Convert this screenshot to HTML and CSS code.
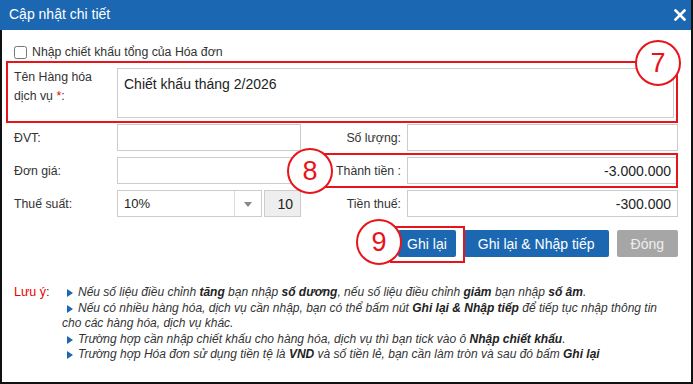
FILE: index.html
```html
<!DOCTYPE html>
<html lang="vi">
<head>
  <meta charset="UTF-8">
  <meta name="viewport" content="width=device-width, initial-scale=1">
  <title>Cập nhật chi tiết</title>
  <link rel="stylesheet" href="styles.css">
</head>
<body>
  <div class="dialog">
    <div class="dialog-header">
      <span class="dialog-title">Cập nhật chi tiết</span>
      <button class="close-btn" aria-label="Đóng">
        <svg width="12" height="12" viewBox="0 0 12 12"><path d="M1.5 1.5 L10.5 10.5 M10.5 1.5 L1.5 10.5" stroke="#fff" stroke-width="2.6" stroke-linecap="square"/></svg>
      </button>
    </div>

    <div class="dialog-body">
      <label class="check-row">
        <input type="checkbox" id="discount-total">
        <span>Nhập chiết khấu tổng của Hóa đơn</span>
      </label>

      <div class="name-row">
        <label class="field-label" for="item-name">Tên Hàng hóa dịch vụ <span class="req">*</span>:</label>
        <textarea id="item-name" class="name-input">Chiết khấu tháng 2/2026</textarea>
      </div>

      <div class="form-grid">
        <label class="field-label">ĐVT:</label>
        <input type="text" class="text-input">
        <label class="field-label right">Số lượng:</label>
        <input type="text" class="text-input">

        <label class="field-label">Đơn giá:</label>
        <input type="text" class="text-input">
        <label class="field-label right">Thành tiền :</label>
        <input type="text" class="text-input num" value="-3.000.000">

        <label class="field-label">Thuế suất:</label>
        <div class="tax-cell">
          <div class="select-box">
            <span class="select-value">10%</span>
            <span class="select-arrow"></span>
          </div>
          <div class="tax-rate">10</div>
        </div>
        <label class="field-label right">Tiền thuế:</label>
        <input type="text" class="text-input num" value="-300.000">
      </div>

      <div class="actions">
        <button class="btn btn-primary btn-save">Ghi lại</button>
        <button class="btn btn-primary">Ghi lại &amp; Nhập tiếp</button>
        <button class="btn btn-disabled">Đóng</button>
      </div>

      <div class="notes">
        <div class="notes-title"><span class="red">Lưu ý</span>:</div>
        <div class="notes-list">
          <p><span class="arrow"></span>Nếu số liệu điều chỉnh <b>tăng</b> bạn nhập <b>số dương</b>, nếu số liệu điều chỉnh <b>giảm</b> bạn nhập <b>số âm</b>.</p>
          <p><span class="arrow"></span>Nếu có nhiều hàng hóa, dịch vụ cần nhập, bạn có thể bấm nút <b>Ghi lại &amp; Nhập tiếp</b> để tiếp tục nhập thông tin cho các hàng hóa, dịch vụ khác.</p>
          <p><span class="arrow"></span>Trường hợp cần nhập chiết khấu cho hàng hóa, dịch vụ thì bạn tick vào ô <b>Nhập chiết khấu</b>.</p>
          <p><span class="arrow"></span>Trường hợp Hóa đơn sử dụng tiền tệ là <b>VND</b> và số tiền lẻ, bạn cần làm tròn và sau đó bấm <b>Ghi lại</b></p>
        </div>
      </div>
    </div>

    <!-- chú thích đánh số -->
    <div class="mark-box box-7"></div>
    <div class="mark-box box-8"></div>
    <div class="mark-box box-9"></div>
    <div class="mark-num num-7">7</div>
    <div class="mark-num num-8">8</div>
    <div class="mark-num num-9">9</div>
  </div>
</body>
</html>
```

FILE: styles.css
```css
* {
  box-sizing: border-box;
}
body {
  margin: 0;
  font-family: "Liberation Sans", Arial, sans-serif;
  color: #222;
  background: #fff;
}
.dialog {
  position: relative;
  width: 693px;
  height: 384px;
  border-right: 2px solid #111;
  border-bottom: 2px solid #111;
  overflow: hidden;
}
.dialog-header {
  height: 30px;
  background: #1b67b1;
  color: #fff;
  display: flex;
  align-items: center;
  justify-content: space-between;
  padding: 0 4px 2px 9px;
}
.dialog-title {
  font-size: 14px;
}
.close-btn {
  border: none;
  background: none;
  padding: 0;
  width: 14px;
  height: 14px;
  display: flex;
  align-items: center;
  justify-content: center;
  margin-top: 2px;
}
.dialog-body {
  border-left: 2px solid #111;
  height: 354px;
  padding: 14px 0 0 12px;
  font-size: 12.3px;
}
.check-row {
  display: flex;
  align-items: center;
  height: 16px;
  color: #333;
}
.check-row input {
  margin: 0 5px 0 0;
  width: 13px;
  height: 13px;
}
.name-row {
  display: flex;
  margin-top: 8px;
  height: 50px;
}
.name-row .field-label {
  display: block;
  width: 103px;
  line-height: 19px;
}
.req {
  color: #e00;
}
.field-label {
  color: #333;
  display: flex;
  align-items: center;
}
.field-label.right {
  justify-content: flex-end;
  padding-right: 6px;
}
.name-input {
  width: 557px;
  height: 50px;
  border: 1px solid #ccc;
  resize: none;
  font-family: inherit;
  font-size: 14px;
  color: #222;
  padding: 7px 6px;
  overflow: hidden;
}
.form-grid {
  display: grid;
  grid-template-columns: 103px 184px 106px 271px;
  grid-auto-rows: 27px;
  row-gap: 6px;
  margin-top: 6px;
}
.text-input {
  height: 27px;
  border: 1px solid #ccc;
  font-family: inherit;
  font-size: 14px;
  color: #222;
  padding: 0 6px;
}
.text-input.num {
  text-align: right;
}
.tax-cell {
  display: flex;
  gap: 2px;
}
.select-box {
  width: 145px;
  border: 1px solid #ccc;
  display: flex;
  font-size: 13px;
}
.select-value {
  flex: 1;
  display: flex;
  align-items: center;
  padding-left: 6px;
}
.select-arrow {
  width: 27px;
  border-left: 1px solid #ddd;
  position: relative;
}
.select-arrow::after {
  content: "";
  position: absolute;
  left: 9px;
  top: 11px;
  border-left: 4px solid transparent;
  border-right: 4px solid transparent;
  border-top: 5px solid #888;
}
.tax-rate {
  flex: 1;
  background: #eee;
  border: 1px solid #ccc;
  font-size: 14px;
  display: flex;
  align-items: center;
  justify-content: flex-end;
  padding-right: 7px;
}
.actions {
  display: flex;
  justify-content: flex-end;
  gap: 8px;
  margin-top: 13px;
  padding-right: 13px;
}
.btn {
  height: 27px;
  border: none;
  border-radius: 2px;
  font-family: inherit;
  font-size: 14px;
  color: #fff;
  padding: 0 14px;
  cursor: pointer;
}
.btn-primary {
  background: #1b67b1;
}
.btn-save {
  padding: 0 9px;
}
.btn-disabled {
  background: #a6a6a6;
  color: #eee;
}
.notes {
  display: flex;
  margin-top: 28px;
  font-size: 12px;
  line-height: 15.5px;
  color: #333;
}
.notes-title {
  width: 48px;
  flex: none;
  font-size: 12.5px;
}
.red {
  color: #e00;
}
.notes-list {
  width: 600px;
  font-style: italic;
}
.notes-list p {
  margin: 0;
  text-indent: 5px;
}
.notes-list b {
  color: #222;
}
.arrow {
  display: inline-block;
  width: 0;
  height: 0;
  border-top: 4.5px solid transparent;
  border-bottom: 4.5px solid transparent;
  border-left: 6px solid #1b67b1;
  margin-right: 5px;
  vertical-align: -1px;
}
.mark-box {
  position: absolute;
  border: 2px solid #e8141b;
}
.box-7 {
  left: 6px;
  top: 61px;
  width: 672px;
  height: 62px;
}
.box-8 {
  left: 300px;
  top: 153px;
  width: 378px;
  height: 35px;
}
.box-9 {
  left: 390px;
  top: 226px;
  width: 75px;
  height: 37px;
}
.mark-num {
  position: absolute;
  width: 46px;
  height: 46px;
  border: 2px solid #e8141b;
  border-radius: 50%;
  background: #fff;
  color: #e8141b;
  font-size: 27px;
  line-height: 42px;
  text-align: center;
}
.num-7 {
  left: 635px;
  top: 40px;
}
.num-8 {
  left: 287px;
  top: 148px;
}
.num-9 {
  left: 356px;
  top: 219px;
}
```
